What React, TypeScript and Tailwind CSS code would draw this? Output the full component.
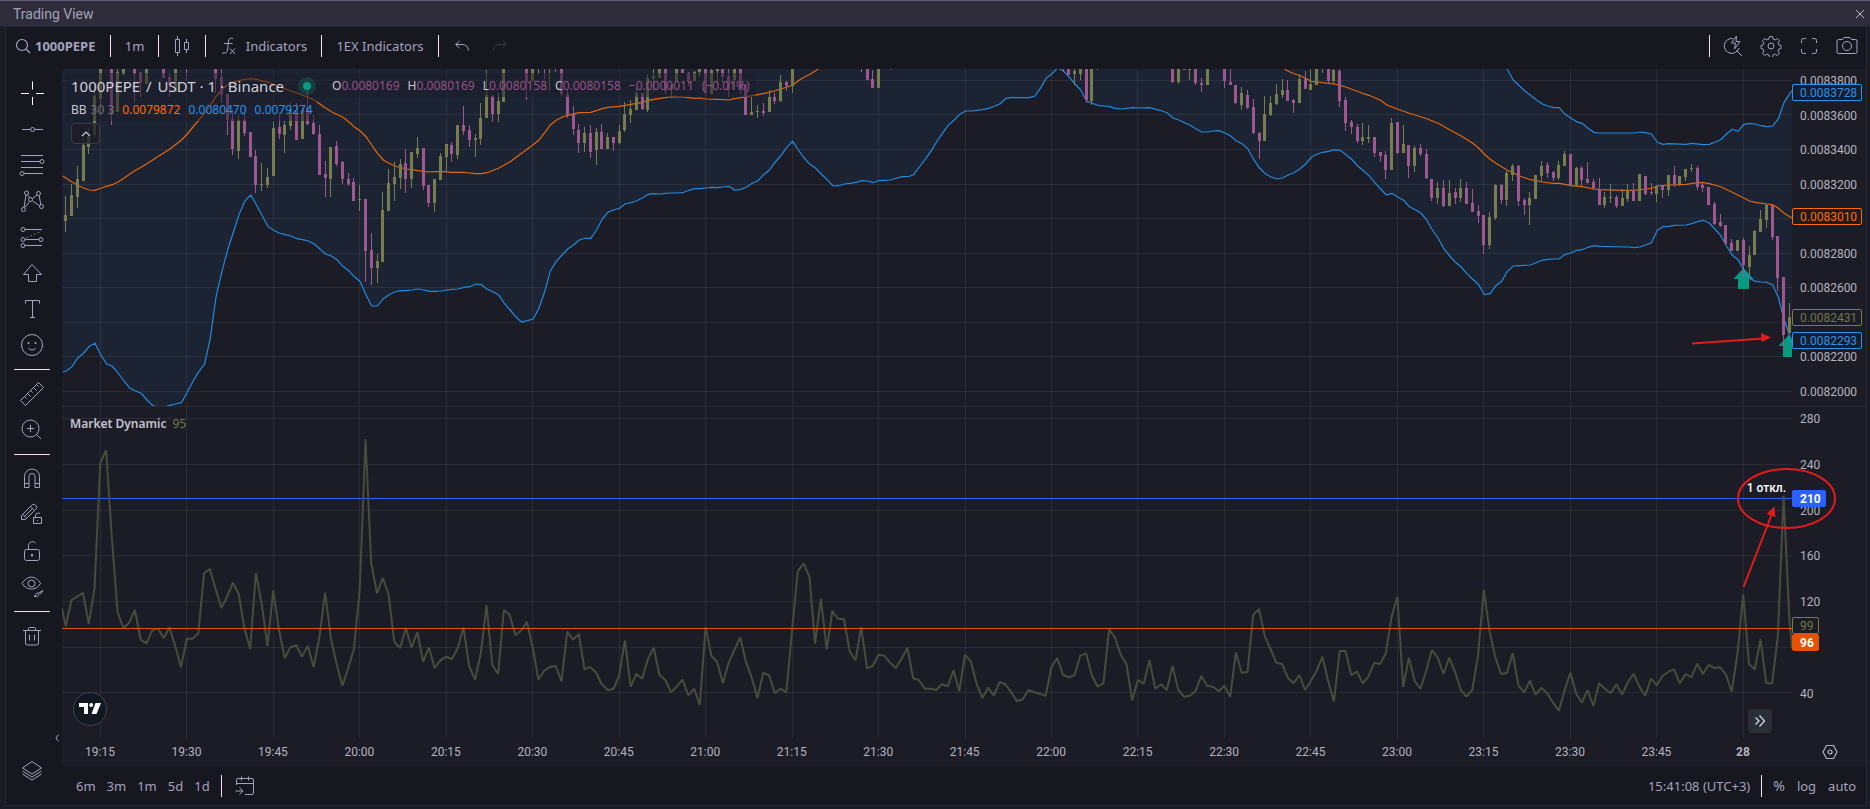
import type { ReactNode } from "react";

// One candle: minute offset from 19:15, high, body top, body bottom, low, direction.
type Candle = [number, number, number, number, number, "u" | "d"];
type Point = [number, number];

const candles: Candle[] = [
  [-6, 408, 465, 483, 516, "u"], [-5, 372, 405, 468, 468, "u"], [-4, 318, 357, 411, 444, "u"],
  [-3, 234, 255, 363, 363, "u"], [-2, 205, 228, 261, 282, "u"], [-1, 70, 108, 225, 230, "u"],
  [0, 27, 27, 117, 165, "u"], [2, 27, 27, 165, 195, "d"], [3, 27, 36, 156, 156, "u"],
  [4, 27, 27, 45, 45, "u"], [6, 27, 27, 42, 126, "d"], [7, 36, 39, 69, 111, "d"],
  [8, 27, 27, 72, 72, "u"], [11, 27, 27, 54, 54, "d"], [12, 39, 51, 75, 111, "d"],
  [13, 27, 27, 96, 96, "u"], [15, 27, 27, 27, 63, "d"], [20, 27, 27, 57, 99, "d"],
  [21, 27, 51, 105, 129, "d"], [22, 102, 102, 180, 225, "d"], [23, 150, 177, 267, 285, "d"],
  [24, 165, 180, 273, 297, "u"], [25, 159, 180, 219, 228, "d"], [26, 216, 216, 291, 291, "d"],
  [27, 270, 288, 375, 399, "d"], [28, 309, 372, 375, 393, "u"], [29, 324, 351, 375, 384, "u"],
  [30, 186, 204, 348, 348, "u"], [31, 156, 201, 222, 237, "d"], [32, 183, 195, 225, 279, "u"],
  [33, 129, 150, 198, 210, "u"], [34, 129, 150, 240, 240, "d"], [35, 141, 150, 237, 237, "u"],
  [36, 90, 141, 192, 195, "d"], [37, 165, 189, 222, 225, "d"], [38, 195, 222, 345, 345, "d"],
  [39, 303, 342, 354, 411, "d"], [40, 261, 261, 357, 411, "u"], [41, 243, 258, 312, 318, "d"],
  [42, 303, 306, 357, 372, "d"], [43, 339, 357, 372, 378, "d"], [44, 354, 366, 423, 423, "d"],
  [45, 375, 417, 420, 453, "u"], [46, 417, 417, 573, 666, "d"], [47, 519, 570, 624, 675, "d"],
  [48, 582, 603, 624, 669, "u"], [49, 396, 450, 606, 606, "u"], [50, 327, 369, 453, 453, "u"],
  [51, 306, 351, 372, 423, "u"], [52, 297, 312, 354, 387, "u"], [53, 267, 309, 357, 399, "d"],
  [54, 276, 276, 357, 384, "u"], [55, 231, 264, 282, 294, "u"], [56, 264, 264, 378, 390, "d"],
  [57, 375, 375, 429, 441, "d"], [58, 357, 357, 429, 456, "u"], [59, 279, 288, 360, 360, "u"],
  [60, 252, 252, 291, 333, "u"], [61, 246, 255, 282, 306, "d"], [62, 195, 195, 285, 297, "u"],
  [63, 138, 195, 213, 225, "d"], [64, 195, 210, 240, 261, "d"], [65, 222, 234, 240, 291, "u"],
  [66, 129, 174, 237, 255, "u"], [67, 30, 105, 174, 174, "u"], [68, 105, 108, 162, 186, "d"],
  [69, 99, 123, 162, 186, "u"], [70, 27, 27, 126, 126, "u"], [74, 27, 27, 66, 120, "d"],
  [75, 27, 27, 63, 63, "u"], [76, 27, 27, 27, 42, "u"], [77, 27, 27, 27, 57, "d"],
  [78, 27, 27, 27, 93, "u"], [79, 27, 27, 27, 36, "u"], [80, 27, 27, 102, 108, "d"],
  [81, 90, 102, 165, 174, "d"], [82, 138, 162, 207, 225, "d"], [83, 192, 210, 249, 279, "d"],
  [84, 201, 219, 249, 276, "u"], [85, 195, 219, 276, 294, "d"], [86, 204, 216, 270, 315, "u"],
  [87, 192, 216, 267, 267, "d"], [88, 219, 231, 267, 267, "u"], [89, 231, 231, 249, 273, "d"],
  [90, 195, 213, 249, 252, "u"], [91, 126, 162, 210, 216, "u"], [92, 120, 147, 165, 189, "u"],
  [93, 81, 99, 150, 150, "u"], [94, 99, 99, 147, 150, "d"], [95, 42, 54, 150, 156, "u"],
  [96, 27, 48, 57, 96, "u"], [97, 27, 27, 54, 54, "u"], [98, 27, 27, 93, 102, "d"],
  [99, 69, 75, 90, 114, "u"], [100, 27, 27, 66, 66, "u"], [101, 27, 27, 39, 39, "d"],
  [102, 36, 39, 66, 78, "d"], [103, 33, 36, 63, 63, "u"], [104, 27, 27, 36, 51, "u"],
  [105, 27, 27, 99, 108, "d"], [106, 27, 30, 102, 102, "u"], [107, 27, 27, 33, 75, "u"],
  [108, 27, 27, 51, 69, "d"], [109, 27, 48, 90, 111, "d"], [110, 27, 27, 60, 90, "u"],
  [111, 27, 27, 90, 102, "d"], [112, 72, 72, 165, 165, "d"], [113, 111, 156, 165, 165, "u"],
  [114, 135, 153, 156, 174, "u"], [115, 129, 153, 159, 168, "d"], [116, 90, 111, 156, 156, "u"],
  [117, 99, 111, 123, 132, "d"], [118, 45, 66, 123, 126, "u"], [119, 63, 66, 78, 93, "d"],
  [120, 27, 27, 78, 99, "u"], [132, 27, 27, 27, 36, "d"], [133, 27, 27, 60, 60, "d"],
  [134, 30, 57, 84, 84, "d"], [135, 27, 27, 84, 84, "u"], [137, 27, 27, 27, 30, "u"],
  [167, 27, 27, 27, 36, "d"], [168, 27, 27, 45, 45, "d"], [169, 27, 33, 42, 75, "u"],
  [170, 27, 27, 42, 60, "u"], [171, 27, 27, 120, 129, "d"], [172, 27, 27, 123, 135, "u"],
  [173, 27, 27, 27, 30, "u"], [186, 27, 27, 66, 69, "d"], [187, 27, 27, 66, 72, "u"],
  [188, 27, 27, 30, 30, "d"], [189, 27, 27, 30, 60, "u"], [190, 27, 27, 69, 75, "d"],
  [191, 54, 69, 75, 96, "d"], [192, 27, 27, 75, 75, "u"], [195, 27, 27, 63, 84, "d"],
  [196, 27, 66, 75, 75, "d"], [197, 75, 75, 129, 132, "d"], [198, 81, 99, 135, 150, "u"],
  [199, 90, 105, 144, 147, "d"], [200, 117, 141, 219, 222, "d"], [201, 216, 219, 243, 297, "d"],
  [202, 108, 162, 243, 243, "u"], [203, 108, 129, 165, 168, "u"], [204, 72, 102, 132, 135, "u"],
  [205, 57, 90, 105, 114, "u"], [206, 60, 90, 123, 123, "d"], [207, 117, 120, 129, 159, "d"],
  [208, 42, 57, 129, 129, "u"], [209, 33, 57, 87, 87, "d"], [210, 27, 72, 90, 90, "u"],
  [211, 27, 27, 75, 75, "u"], [212, 27, 27, 27, 39, "u"], [213, 27, 27, 63, 72, "d"],
  [214, 27, 30, 63, 72, "u"], [215, 27, 33, 123, 141, "d"], [216, 111, 120, 189, 213, "d"],
  [217, 180, 186, 201, 222, "d"], [218, 192, 201, 243, 249, "d"], [219, 189, 231, 243, 255, "u"],
  [220, 195, 231, 237, 249, "u"], [221, 231, 231, 279, 291, "d"], [222, 276, 276, 288, 306, "d"],
  [223, 273, 285, 330, 357, "d"], [224, 174, 189, 330, 330, "u"], [225, 186, 186, 279, 282, "d"],
  [226, 195, 252, 279, 279, "u"], [227, 255, 255, 318, 354, "d"], [228, 258, 264, 318, 336, "u"],
  [229, 252, 264, 282, 288, "d"], [230, 267, 282, 354, 357, "d"], [231, 357, 357, 414, 423, "d"],
  [232, 366, 384, 414, 432, "u"], [233, 360, 384, 438, 441, "d"], [234, 360, 399, 438, 438, "u"],
  [235, 384, 396, 414, 432, "d"], [236, 357, 384, 414, 426, "u"], [237, 366, 384, 432, 432, "d"],
  [238, 387, 429, 456, 456, "d"], [239, 435, 453, 468, 489, "d"], [240, 465, 465, 555, 582, "d"],
  [241, 456, 471, 555, 567, "u"], [242, 372, 375, 474, 480, "u"], [243, 372, 375, 420, 432, "d"],
  [244, 333, 339, 420, 438, "u"], [245, 312, 318, 345, 363, "u"], [246, 315, 318, 423, 438, "d"],
  [247, 414, 420, 435, 465, "d"], [248, 396, 414, 435, 495, "u"], [249, 345, 345, 417, 417, "u"],
  [250, 303, 318, 348, 366, "u"], [251, 306, 315, 339, 354, "d"], [252, 333, 336, 354, 363, "d"],
  [253, 303, 315, 354, 360, "u"], [254, 273, 282, 318, 318, "u"], [255, 282, 282, 375, 378, "d"],
  [256, 321, 324, 375, 378, "u"], [257, 318, 324, 360, 378, "d"], [258, 306, 357, 369, 369, "d"],
  [259, 357, 366, 384, 390, "d"], [260, 354, 387, 435, 435, "d"], [261, 396, 411, 435, 444, "u"],
  [262, 372, 411, 414, 429, "u"], [263, 405, 411, 438, 444, "d"], [264, 387, 414, 438, 438, "u"],
  [265, 372, 390, 417, 426, "u"], [266, 369, 390, 423, 423, "d"], [267, 342, 342, 423, 423, "u"],
  [268, 348, 348, 402, 405, "d"], [269, 369, 396, 399, 405, "d"], [270, 375, 378, 402, 426, "u"],
  [271, 378, 378, 390, 414, "d"], [272, 345, 345, 390, 408, "u"], [273, 318, 345, 375, 381, "d"],
  [274, 348, 348, 372, 378, "u"], [275, 327, 327, 351, 363, "u"], [276, 312, 324, 327, 336, "u"],
  [277, 318, 324, 381, 390, "d"], [278, 369, 375, 384, 396, "d"], [279, 381, 381, 435, 435, "d"],
  [280, 426, 432, 492, 495, "d"], [281, 462, 486, 498, 501, "d"], [282, 495, 495, 552, 552, "d"],
  [283, 537, 549, 573, 573, "d"], [284, 540, 540, 573, 573, "u"], [285, 534, 540, 615, 651, "d"],
  [286, 558, 585, 621, 648, "u"], [287, 510, 513, 585, 585, "u"], [288, 450, 477, 516, 516, "u"],
  [289, 432, 435, 480, 504, "u"], [290, 432, 435, 531, 540, "d"], [291, 528, 528, 654, 693, "d"],
  [292, 651, 651, 825, 870, "d"], [293, 729, 771, 819, 819, "u"],
];

const lowerBand: Point[] = [
  [-6.6, 936], [-6, 933], [-5, 920], [-4, 894], [-3, 880], [-2, 859], [-1, 850], [0, 885], [1, 912], [2, 919],
  [3, 939], [4, 963], [5, 984], [6, 993], [7, 1000], [8, 1020], [9, 1037], [10, 1042], [11, 1042], [12, 1036],
  [13, 1032], [14, 1028], [15, 997], [16, 964], [17, 935], [18, 912], [19, 835], [20, 710], [21, 635], [22, 570],
  [23, 517], [24, 463], [25, 423], [26, 405], [27, 435], [28, 467], [29, 500], [30, 511], [31, 520], [32, 524],
  [33, 528], [34, 536], [35, 539], [36, 543], [37, 552], [38, 567], [39, 582], [40, 588], [41, 600], [42, 619],
  [43, 632], [44, 650], [45, 665], [46, 705], [47, 738], [48, 738], [49, 716], [50, 704], [51, 696], [52, 692],
  [53, 692], [54, 690], [55, 687], [56, 690], [57, 694], [58, 694], [59, 693], [60, 690], [61, 688], [62, 687],
  [63, 682], [64, 680], [65, 673], [66, 674], [67, 688], [68, 695], [69, 705], [70, 730], [71, 750], [72, 771],
  [73, 786], [74, 782], [75, 777], [76, 745], [77, 695], [78, 632], [79, 605], [80, 585], [81, 567], [82, 555],
  [83, 540], [84, 535], [85, 535], [86, 510], [87, 477], [88, 456], [89, 450], [90, 445], [91, 431], [92, 428],
  [93, 422], [94, 413], [95, 403], [96, 401], [97, 402], [98, 400], [99, 399], [100, 399], [101, 398], [102, 391],
  [103, 386], [104, 386], [105, 384], [106, 382], [107, 383], [108, 381], [109, 379], [110, 391], [111, 388], [112, 382],
  [113, 370], [114, 362], [115, 344], [116, 330], [117, 306], [118, 287], [119, 262], [120, 244], [121, 270], [122, 294],
  [123, 313], [124, 325], [125, 343], [126, 359], [127, 378], [128, 377], [129, 372], [130, 370], [131, 367], [132, 362],
  [133, 363], [134, 368], [135, 362], [136, 361], [137, 360], [138, 355], [139, 350], [140, 350], [141, 344], [142, 321],
  [143, 298], [144, 274], [145, 245], [146, 220], [147, 196], [148, 181], [149, 163], [150, 153], [151, 153], [152, 151],
  [153, 149], [154, 145], [155, 139], [156, 131], [157, 115], [158, 113], [161, 113], [162, 109], [163, 85], [164, 55],
  [165, 41], [166, 24], [167, 33], [168, 52], [169, 72], [170, 90], [171, 124], [172, 130], [173, 136], [174, 138],
  [175, 140], [176, 145], [177, 147], [178, 145], [179, 143], [180, 144], [182, 143], [183, 148], [184, 152], [185, 159],
  [186, 174], [187, 180], [188, 188], [189, 196], [190, 207], [191, 216], [192, 216], [193, 213], [194, 212], [195, 219],
  [196, 228], [197, 243], [198, 251], [199, 267], [200, 299], [201, 324], [202, 341], [203, 351], [204, 357], [205, 354],
  [206, 345], [207, 338], [208, 327], [209, 312], [210, 292], [211, 282], [212, 277], [213, 274], [214, 269], [215, 271],
  [216, 284], [217, 298], [218, 317], [219, 332], [220, 347], [221, 368], [222, 387], [223, 405], [224, 400], [225, 412],
  [226, 421], [227, 440], [228, 449], [229, 459], [230, 480], [231, 510], [232, 535], [233, 567], [234, 588], [235, 607],
  [236, 622], [237, 641], [238, 658], [239, 674], [240, 704], [241, 701], [242, 677], [243, 664], [244, 634], [245, 618],
  [246, 617], [247, 616], [248, 615], [249, 608], [250, 601], [251, 598], [252, 597], [253, 597], [254, 583], [255, 579],
  [256, 571], [257, 569], [258, 562], [259, 557], [260, 559], [265, 561], [266, 563], [267, 561], [268, 555], [269, 548],
  [270, 511], [271, 500], [272, 499], [273, 496], [275, 495], [276, 491], [277, 485], [278, 481], [279, 489], [280, 507],
  [281, 527], [282, 557], [283, 585], [284, 599], [285, 630], [286, 655], [287, 664], [288, 666], [289, 667], [290, 675],
  [291, 712], [292, 778], [293, 830], [293.6, 860],
];

const basisEarly: Point[] = [
  [-6.6, 348], [-5, 366], [-4, 376], [-3, 384], [-2, 390], [-1, 391], [0, 385], [1, 379], [2, 374], [3, 366],
  [4, 355], [5, 343], [6, 331], [7, 322], [8, 311], [10, 289], [12, 267], [14, 240], [15, 222], [17, 180],
  [18, 160], [20, 110], [21, 88], [22, 75], [23, 65], [25, 58], [26, 56], [27, 58], [29, 67], [31, 80],
  [33, 93], [34, 98], [35, 106], [36, 112], [37, 120], [38, 132], [39, 144], [40, 155], [42, 172], [43, 185],
  [44, 201], [45, 213], [46, 230], [47, 255], [48, 280], [49, 300], [50, 310], [51, 318], [53, 327], [55, 332],
  [57, 336], [59, 334], [61, 337], [63, 337], [64, 339], [65, 341], [66, 341], [67, 338], [69, 325], [71, 305],
  [73, 280], [75, 254], [76, 240], [77, 218], [78, 195], [79, 181], [80, 172], [81, 166], [83, 158], [85, 157],
  [87, 146], [88, 142], [90, 139], [92, 133], [94, 127], [95, 121], [97, 115], [99, 110], [101, 111], [103, 115],
  [104, 114], [105, 117], [107, 118], [109, 120], [110, 116], [112, 110], [114, 104], [116, 97], [118, 87], [120, 76],
  [121, 62], [122, 52], [123, 43], [124, 32], [125, 20],
];

const basisLate: Point[] = [
  [205, 23], [206, 34], [207, 41], [208, 47], [209, 55], [210, 64], [211, 66], [213, 70], [214, 72], [215, 77],
  [216, 81], [217, 88], [218, 94], [219, 101], [220, 106], [221, 113], [222, 121], [223, 134], [225, 148], [227, 160],
  [228, 165], [230, 176], [232, 190], [234, 209], [236, 228], [238, 250], [239, 264], [240, 282], [241, 298], [242, 310],
  [243, 320], [244, 331], [245, 338], [246, 347], [247, 353], [248, 359], [249, 362], [250, 366], [252, 370], [253, 370],
  [254, 373], [255, 377], [257, 380], [259, 387], [260, 389], [264, 391], [266, 391], [268, 387], [269, 385], [270, 378],
  [272, 375], [275, 373], [277, 368], [278, 368], [279, 371], [281, 380], [283, 397], [285, 414], [286, 423], [287, 427],
  [289, 432], [290, 434], [291, 445], [292, 460], [293, 470], [293.6, 475],
];

const upperBand: Point[] = [
  [243.5, 15], [244, 28], [245, 60], [246, 76], [247, 92], [248, 106], [249, 119], [250, 131], [251, 138], [252, 143],
  [253, 143], [254, 163], [255, 174], [256, 185], [257, 190], [258, 205], [259, 217], [260, 219], [266, 219], [267, 216],
  [268, 218], [269, 222], [270, 247], [271, 253], [272, 251], [275, 253], [276, 250], [278, 254], [279, 253], [280, 247],
  [281, 239], [282, 222], [283, 208], [284, 214], [285, 193], [286, 190], [287, 192], [288, 197], [289, 200], [290, 198],
  [291, 177], [292, 127], [293, 100], [293.6, 88],
];

// One value per minute, starting at 19:09.
const dynamic = [
  678, 600, 590, 578, 672, 565, 190, 150, 412, 636, 684, 668, 630, 719, 730, 692, 685, 715, 682, 738, 802, 716, 716,
  700, 520, 507, 567, 624, 590, 548, 582, 685, 747, 519, 612, 738, 571, 690, 774, 742, 736, 770, 737, 802, 712, 578,
  715, 793, 857, 805, 747, 570, 118, 490, 580, 534, 582, 726, 744, 684, 743, 696, 785, 743, 804, 781, 770, 777, 745,
  682, 798, 839, 760, 616, 795, 822, 630, 644, 706, 692, 665, 742, 839, 812, 801, 798, 844, 695, 719, 702, 808, 801,
  818, 853, 870, 867, 828, 721, 860, 822, 836, 777, 743, 825, 839, 877, 860, 839, 886, 866, 915, 681, 768, 785, 850,
  788, 750, 712, 785, 833, 894, 819, 825, 880, 866, 877, 690, 514, 490, 530, 731, 596, 748, 633, 657, 657, 754, 781,
  681, 805, 798, 764, 767, 788, 804, 776, 743, 835, 840, 866, 866, 870, 853, 859, 811, 874, 764, 784, 850, 894, 863,
  887, 846, 853, 876, 904, 898, 870, 877, 881, 887, 801, 774, 825, 832, 826, 767, 760, 826, 860, 850, 688, 712, 764,
  792, 901, 839, 852, 780, 866, 853, 870, 798, 870, 890, 887, 873, 828, 857, 860, 874, 857, 890, 757, 819, 815, 645,
  627, 709, 747, 788, 792, 833, 850, 825, 870, 842, 812, 770, 843, 905, 753, 753, 825, 815, 850, 829, 788, 792, 760,
  650, 590, 860, 774, 843, 867, 812, 750, 773, 822, 773, 815, 870, 890, 870, 765, 570, 695, 773, 822, 819, 760, 856,
  877, 842, 884, 863, 880, 908, 932, 873, 818, 880, 908, 870, 918, 850, 866, 880, 853, 884, 846, 822, 860, 887, 836,
  856, 828, 815, 808, 850, 822, 832, 791, 822, 795, 804, 802, 823, 875, 760, 583, 792, 808, 718, 850, 850, 710, 287,
  660,
];

const times = [
  "19:15", "19:30", "19:45", "20:00", "20:15", "20:30", "20:45", "21:00", "21:15", "21:30",
  "21:45", "22:00", "22:15", "22:30", "22:45", "23:00", "23:15", "23:30", "23:45", "28",
];

// Empty entries are the ticks that a price tag covers.
const prices = ["0.0083800", "0.0083600", "0.0083400", "0.0083200", "", "0.0082800", "0.0082600", "", "0.0082200", "0.0082000"];
const levels = ["280", "240", "200", "160", "120", "", "40"];

const priceTags = [
  { value: "0.0083728", top: 15, className: "border-[#2196f3] text-[#2196f3]" },
  { value: "0.0083010", top: 139, className: "border-[#ff6d00] text-[#ff6d00]" },
  { value: "0.0082431", top: 240, className: "border-[#787d4d] text-[#72774a]" },
  { value: "0.0082293", top: 263, className: "border-[#2196f3] text-[#2196f3]" },
];

const levelTags = [
  { value: "210", top: 83, className: "w-[34px] border-[#2962ff] bg-[#2962ff] font-bold text-white" },
  { value: "99", top: 210, className: "w-[27px] border-[#787d4d] bg-[#1c1c27] text-[#72774a]" },
  { value: "96", top: 227, className: "w-[27px] border-[#e65100] bg-[#e65100] font-bold text-white" },
];

const PANE_W = 1730;
const PRICE_H = 337;
const LEVEL_H = 331;

const minuteX = (n: number) => 38.3 + n * 5.7647;
// Series heights are stored in thirds of a pixel.
const priceY = (v: number) => (v - 27) / 3;
const levelY = (v: number) => v / 3 - 7;

const line = (points: Point[]) => points.map(([n, v]) => `${(minuteX(n) + 0.5).toFixed(1)},${priceY(v).toFixed(1)}`).join(" ");

const columns = times.map((_, i) => Math.floor(38.3 + i * 86.47));

const bandArea = `0,0 ${minuteX(243.5).toFixed(1)},0 ${line(upperBand)} ${line([...lowerBand].reverse())}`;

const dynamicLine = [
  `0,${levelY(625)}`,
  ...dynamic.map((v, i) => `${minuteX(i - 6).toFixed(1)},${levelY(v).toFixed(1)}`),
  `1730,${levelY(745)}`,
].join(" ");

const Icon = ({ children, size = 28 }: { children: ReactNode; size?: number }) => (
  <svg width={size} height={size} viewBox={`0 0 ${size} ${size}`} fill="none" stroke="currentColor" aria-hidden="true" className="shrink-0">
    {children}
  </svg>
);

const drawTools: { label: string; icon: ReactNode; active?: boolean }[][] = [
  [
    { label: "Cross", active: true, icon: <path d="M14.5 2.5v8M14.5 18v8M3 14.5h8M18 14.5h8" /> },
    { label: "Trend line", icon: <><path d="M4 14.5h8M17 14.5h8" /><circle cx="14.5" cy="14.5" r="2" /></> },
    {
      label: "Fib retracement",
      icon: <><path d="M3 4.5h22M3 10.5h19M3 16.5h22M6 22.5h19" /><circle cx="24" cy="10.5" r="2" /><circle cx="4" cy="22.5" r="2" /></>,
    },
    {
      label: "Patterns",
      icon: (
        <>
          <path d="M6 20.5 8 8M9.5 8l2.5 3M14.5 11.5 19 8M21 8.5l2 9.5M14.5 14l7.5 5M11.5 14.5 7 20.5" />
          <circle cx="8.5" cy="6" r="2" /><circle cx="20.5" cy="6.5" r="2" /><circle cx="12.5" cy="12.5" r="2" />
          <circle cx="5.5" cy="22.5" r="2" /><circle cx="23.5" cy="19.5" r="2" />
        </>
      ),
    },
    {
      label: "Prediction",
      icon: (
        <>
          <path d="M7 6.5h17M7 16.5h14M7 22.5h17" />
          <path d="M9 14.5 24 8" strokeDasharray="1 3" />
          <circle cx="5" cy="6.5" r="2" /><circle cx="5" cy="16.5" r="2" /><circle cx="5" cy="22.5" r="2" /><circle cx="23" cy="16.5" r="2" />
        </>
      ),
    },
    { label: "Icons", icon: <path d="M14 5.5 23.5 15.5h-5v7h-8v-7h-5z" /> },
    { label: "Text", icon: <path d="M7.5 8.5v-3h14v3M14.5 5.5v17M12 22.5h5" /> },
    {
      label: "Emoji",
      icon: (
        <>
          <circle cx="14" cy="14" r="10.5" />
          <path d="M10.5 17c1.5 2.5 5.5 2.5 7 0" />
          <circle cx="10.5" cy="12" r="1" fill="currentColor" stroke="none" /><circle cx="17.5" cy="12" r="1" fill="currentColor" stroke="none" />
        </>
      ),
    },
  ],
  [
    { label: "Measure", icon: <path d="M2.5 20.5 20.5 2.5l5 5-18 18zM6.5 16.5l2 2M9.5 13.5l3 3M12.5 10.5l2 2M15.5 7.5l3 3M18.5 4.5l2 2" /> },
    { label: "Zoom in", icon: <><circle cx="12.5" cy="12.5" r="8.5" /><path d="M18.5 18.5 23 23M12.5 9v7M9 12.5h7" /></> },
  ],
  [
    { label: "Magnet", icon: <path d="M6.5 22.5v-11a7.5 7.5 0 0 1 15 0v11h-4.5v-11a3 3 0 0 0-6 0v11zM6.5 18.5H11M17 18.5h4.5" /> },
    {
      label: "Lock drawing mode",
      icon: (
        <>
          <path d="M3.5 18.5v-4L14.5 3.5q2-1 4 1.5 1 1.5 0 2.5l-11 11zM5 13.5l3.5 4M12.5 5.5l4 4M7 15l8-8" />
          <path d="M15.5 16.5h8v6h-8zM17.5 16.5v-2a2.5 2.5 0 0 1 4.5-1.5" />
          <path d="M19 19.5h1" />
        </>
      ),
    },
    {
      label: "Lock all drawings",
      icon: <><rect x="6.5" y="12.5" width="15" height="11" rx="2" /><path d="M10.5 12.5V8.5a4 4 0 0 1 7-2.5" /><path d="M14 17v2.5" strokeWidth="2" /></>,
    },
    {
      label: "Hide all drawings",
      icon: (
        <>
          <path d="M4 10.5C9 2 18 2 22.5 10.5 18 18 9 18 4 10.5z" />
          <circle cx="13.5" cy="10.5" r="3.5" />
          <path d="M16 23.5c2 0 1-3 3.5-3.5 2 0 2 3.5-1 3.5zM20.5 20l4.5-2.5-3 4" />
        </>
      ),
    },
  ],
  [
    { label: "Remove", icon: <path d="M5 8.5h18M7.5 8.5V21q0 2 2 2h9q2 0 2-2V8.5M10.5 8.5v-2q0-1 1-1h5q1 0 1 1v2M11.5 12.5v6M16.5 12.5v6" /> },
  ],
];

const Divider = () => <span className="h-[22px] w-px shrink-0 bg-[#f3e0f5]" />;

const TitleBar = () => (
  <header className="flex h-[26px] shrink-0 items-center justify-between border-t border-[#615e7e] bg-[#2f2d3b] pl-[13px] pr-1">
    <h1 className="font-['Roboto',sans-serif] text-sm leading-5 text-[#a3a1b8]">Trading View</h1>
    <button type="button" aria-label="Close" className="text-[#b9b7cc]">
      <svg width="12" height="12" viewBox="0 0 12 12" fill="none" stroke="currentColor" aria-hidden="true">
        <path d="M2 2l8 8M10 2l-8 8" />
      </svg>
    </button>
  </header>
);

const Toolbar = () => (
  <div className="flex h-[38px] shrink-0 items-center text-[13px] leading-5">
    <button type="button" className="flex w-[104px] items-center gap-1 whitespace-nowrap pl-[9px] font-bold">
      <svg width="16" height="16" viewBox="0 0 16 16" fill="none" stroke="currentColor" strokeWidth="1.2" aria-hidden="true" className="shrink-0">
        <circle cx="7" cy="7" r="5.5" /><path d="M11 11l4 4" />
      </svg>
      1000PEPE
    </button>
    <Divider />
    <button type="button" className="w-[47px]">1m</button>
    <Divider />
    <button type="button" aria-label="Candles" className="flex w-[46px] justify-center">
      <Icon size={22}>
        <path d="M4.5 4.5h4v13h-4zM6.5 1v3.5M6.5 17.5V21M13.5 7.5h4v7h-4zM15.5 4v3.5M15.5 14.5V18" />
      </Icon>
    </button>
    <Divider />
    <button type="button" className="flex w-[115px] items-center justify-center gap-2">
      <Icon size={18}>
        <path d="M13 1.5Q9 0 8.5 4L7.5 13q-.5 4-5.5 3M4 6.5h8.5M10 11.5l5 5.5M15 11.5 10 17" />
      </Icon>
      Indicators
    </button>
    <Divider />
    <button type="button" className="w-[116px] whitespace-nowrap">1EX Indicators</button>
    <Divider />
    <button type="button" aria-label="Undo" className="ml-1 flex w-[38px] justify-center">
      <Icon size={18}><path d="M6.5 4 2.5 7.5l4 3.5M3 7.5h6q6 0 6.5 6" /></Icon>
    </button>
    <button type="button" aria-label="Redo" className="flex w-[38px] justify-center text-[#3a3947]">
      <Icon size={18}><path d="M11.5 4l4 3.5-4 3.5M15 7.5H9q-6 0-6.5 6" /></Icon>
    </button>
    <div className="ml-auto flex items-center">
      <Divider />
      <button type="button" aria-label="Quick search" className="ml-1 flex w-[38px] justify-center">
        <Icon size={22}>
          <path d="M11 3.5A7.5 7.5 0 1 0 17 13M14.5 15.5 20 21M14.5 1 9.5 8h4l-1 6L18 6.5h-4z" />
        </Icon>
      </button>
      <button type="button" aria-label="Settings" className="flex w-[38px] justify-center">
        <Icon size={22}>
          <circle cx="11" cy="11" r="3" />
          <path d="M9.5 1.5h3l.5 2.5 2.2.9 2.1-1.4 2.2 2.2-1.4 2.1.9 2.2 2 .5v3l-2 .5-.9 2.2 1.4 2.1-2.2 2.2-2.1-1.4-2.2.9-.5 2.5h-3l-.5-2.5-2.2-.9-2.1 1.4-2.2-2.2 1.4-2.1-.9-2.2-2-.5v-3l2-.5.9-2.2-1.4-2.1 2.2-2.2L6.8 4.9 9 4z" />
        </Icon>
      </button>
      <button type="button" aria-label="Fullscreen" className="flex w-[38px] justify-center">
        <Icon size={18}>
          <path d="M1.5 6V3.5q0-2 2-2H6M12 1.5h2.5q2 0 2 2V6M16.5 12v2.5q0 2-2 2H12M6 16.5H3.5q-2 0-2-2V12" />
        </Icon>
      </button>
      <button type="button" aria-label="Snapshot" className="flex w-[38px] justify-center">
        <Icon size={22}>
          <path d="M2.5 4.5h4l1.5-2h6l1.5 2h4q1.5 0 1.5 1.5v11q0 1.5-1.5 1.5h-17Q1 18.5 1 17V6q0-1.5 1.5-1.5z" />
          <circle cx="11" cy="11" r="4.5" />
        </Icon>
      </button>
    </div>
  </div>
);

const Sidebar = () => (
  <nav aria-label="Drawing tools" className="relative flex w-[56px] shrink-0 flex-col items-center pb-4 pr-1 pt-1.5">
    {drawTools.map((group, i) => (
      <div key={i} className="flex flex-col items-center">
        {i > 0 && <span className="my-1.5 h-px w-9 bg-[#f3e0f5]" />}
        {group.map((tool) => (
          <button
            key={tool.label}
            type="button"
            aria-label={tool.label}
            className={`flex h-9 w-9 items-center justify-center ${tool.active ? "text-white" : ""}`}
          >
            <Icon>{tool.icon}</Icon>
          </button>
        ))}
      </div>
    ))}
    <button type="button" aria-label="Hide toolbar" className="absolute bottom-[62px] right-[3px]">
      <svg width="4" height="10" viewBox="0 0 4 10" fill="none" stroke="currentColor" aria-hidden="true">
        <path d="M3.5 1.5 1 5l2.5 3.5" />
      </svg>
    </button>
    <button type="button" aria-label="Object tree" className="mt-auto flex h-9 w-9 items-center justify-center">
      <Icon>
        <path d="M14 4.5 4.5 11l9.5 6 9.5-6zM4.5 14l9.5 6 9.5-6M4.5 17l9.5 6 9.5-6" />
      </Icon>
    </button>
  </nav>
);

const Ohlc = ({ name, value }: { name: string; value: string }) => (
  <span>
    <span className="text-[#c9c8d3]">{name}</span>
    {value}
  </span>
);

const PriceLegend = () => (
  <div className="absolute left-1 top-1 flex flex-col items-start font-['Noto_Sans',sans-serif] text-xs leading-4">
    <div className="flex h-6 items-center rounded-sm bg-[#1c1c27]/50 pl-[5px] pr-[6px] pt-px">
      <h2 className="flex whitespace-pre text-[15px] leading-5 text-[#d1d0db]">
        1000PEPE <span className="px-0.5">/</span> USDT · 1 · Binance
      </h2>
      <span className="ml-[14px] flex h-[18px] w-[18px] items-center justify-center rounded-full bg-[#089981]/25">
        <span className="h-2 w-2 rounded-full bg-[#089981]" />
      </span>
      <div className="ml-4 flex gap-2 whitespace-nowrap text-[#97538a]">
        <Ohlc name="O" value="0.0080169" />
        <Ohlc name="H" value="0.0080169" />
        <Ohlc name="L" value="0.0080158" />
        <Ohlc name="C" value="0.0080158" />
        <span>−0.0000011</span>
        <span>(−0.01%)</span>
      </div>
    </div>
    <div className="flex h-6 items-center gap-2 rounded-sm bg-[#1c1c27]/50 pl-[5px] pr-1 pt-px">
      <span className="flex gap-1">
        <span className="text-[#c9c8d3]">BB</span>
        <span className="text-[#6f6e7b]">30 3</span>
      </span>
      <span className="text-[#ff6d00]">0.0079872</span>
      <span className="text-[#2196f3]">0.0080470</span>
      <span className="text-[#2196f3]">0.0079274</span>
    </div>
    <button
      type="button"
      aria-label="Collapse legend"
      className="ml-[5px] mt-0.5 flex h-[21px] w-[29px] items-center justify-center rounded-sm border border-[#3a3a47] bg-[#1c1c27]/75 text-[#c9c8d3]"
    >
      <svg width="10" height="6" viewBox="0 0 10 6" fill="none" stroke="currentColor" strokeWidth="1.2" aria-hidden="true">
        <path d="M1 5l4-4 4 4" />
      </svg>
    </button>
  </div>
);

const GridLines = ({ rows, height }: { rows: number[]; height: number }) => (
  <g fill="#ffffff" fillOpacity="0.065" shapeRendering="crispEdges">
    {columns.map((x) => <rect key={x} x={x} y={0} width={1} height={height} />)}
    {rows.map((y) => <rect key={y} x={0} y={y} width={PANE_W} height={1} />)}
  </g>
);

const PricePane = () => (
  <section aria-label="Price" className="flex min-h-0 flex-[337_1_0%]">
    <div className="relative min-w-0 flex-1">
      <svg viewBox={`0 0 ${PANE_W} ${PRICE_H}`} preserveAspectRatio="none" className="absolute inset-0 h-full w-full" aria-hidden="true">
        <polygon points={bandArea} fill="#2196f3" fillOpacity="0.06" />
        <GridLines rows={prices.map((_, i) => Math.floor(11.4 + i * 34.56))} height={PRICE_H} />
        <g fill="#089981">
          <path d="M1681.5 199l10 11h-4.5v10h-11v-10h-4.5z" />
          <path d="M1726.5 266l10 11h-4.5v11h-11v-11h-4.5z" />
        </g>
        <g fill="none" strokeWidth="1.2">
          <polyline points={line(upperBand)} stroke="#2389dc" />
          <polyline points={line(lowerBand)} stroke="#2389dc" />
          <polyline points={line(basisEarly)} stroke="#e5670a" />
          <polyline points={line(basisLate)} stroke="#e5670a" />
        </g>
        <g shapeRendering="crispEdges">
          {candles.map(([n, high, top, bottom, low, dir]) => {
            const x = Math.floor(minuteX(n));
            return (
              <g key={n} fill={dir === "u" ? "#787d4d" : "#9f578f"}>
                <rect x={x} y={priceY(high)} width={1} height={(low - high) / 3} />
                <rect x={x - 1} y={priceY(top)} width={3} height={(bottom - top) / 3} />
              </g>
            );
          })}
        </g>
      </svg>
      <PriceLegend />
    </div>
    <div className="relative flex w-[74px] shrink-0 flex-col justify-between pb-[6px] pl-2 pt-1">
      {prices.map((price, i) => <span key={i} className="h-4">{price}</span>)}
      {priceTags.map((tag) => (
        <span
          key={tag.value}
          style={{ top: `${(tag.top / PRICE_H) * 100}%` }}
          className={`absolute left-0 h-[17px] w-[70px] rounded-xs border bg-[#1c1c27] pl-[7px] leading-4 ${tag.className}`}
        >
          {tag.value}
        </span>
      ))}
    </div>
  </section>
);

const DynamicPane = () => (
  <section aria-label="Market Dynamic" className="flex min-h-0 flex-[331_1_0%]">
    <div className="relative min-w-0 flex-1">
      <svg viewBox={`0 0 ${PANE_W} ${LEVEL_H}`} preserveAspectRatio="none" className="absolute inset-0 h-full w-full" aria-hidden="true">
        <GridLines rows={levels.map((_, i) => Math.floor(11.8 + i * 45.67))} height={LEVEL_H} />
        <rect x={0} y={91} width={PANE_W} height={1} fill="#2962ff" />
        <polyline points={dynamicLine} fill="none" stroke="#4a4c3b" strokeWidth="2" strokeLinejoin="bevel" />
        <rect x={0} y={221} width={PANE_W} height={1} fill="#e65100" />
      </svg>
      <div className="absolute left-2 top-[9px] flex gap-1.5 font-['Noto_Sans',sans-serif] text-xs leading-4">
        <h2 className="font-semibold text-[#c4c3ce]">Market Dynamic</h2>
        <span className="text-[#72774a]">95</span>
      </div>
      <span className="absolute right-[6px] top-[73px] font-medium leading-4 text-white">1 откл.</span>
      <a
        href="#tradingview"
        aria-label="TradingView"
        className="absolute bottom-[12px] left-[11px] flex h-[34px] w-[34px] items-center justify-center rounded-full border border-[#40414d] bg-[#131722] text-white"
      >
        <svg width="22" height="12" viewBox="0 0 22 12" fill="currentColor" aria-hidden="true">
          <path d="M0 0h9v11H5V4H0z" /><circle cx="12.2" cy="2" r="2" /><path d="M16.5 0H22l-4.5 11h-5z" />
        </svg>
      </a>
      <button
        type="button"
        aria-label="Scroll to latest bar"
        className="absolute bottom-[5px] right-5 flex h-6 w-6 items-center justify-center rounded-sm bg-[#2a2e39] text-[#d1d4dc] shadow"
      >
        <svg width="12" height="12" viewBox="0 0 12 12" fill="none" stroke="currentColor" strokeWidth="1.3" aria-hidden="true">
          <path d="M1.5 2.5 5 6 1.5 9.5M5.5.5 10.5 6l-5 5.5" />
        </svg>
      </button>
    </div>
    <div className="relative flex w-[74px] shrink-0 flex-col justify-between pb-9 pl-2 pt-1">
      {levels.map((level, i) => <span key={i} className="h-4">{level}</span>)}
      {levelTags.map((tag) => (
        <span
          key={tag.value}
          style={{ top: `${(tag.top / LEVEL_H) * 100}%` }}
          className={`absolute left-0 h-[17px] rounded-xs border pl-[7px] leading-4 ${tag.className}`}
        >
          {tag.value}
        </span>
      ))}
    </div>
  </section>
);

const TimeAxis = () => (
  <div className="flex h-7 shrink-0 items-center">
    <div className="flex min-w-0 flex-1 justify-between pl-[22px] pr-[33px]">
      {times.map((time) => (
        <span key={time} className={`w-8 text-center ${time === "28" ? "font-bold" : ""}`}>{time}</span>
      ))}
    </div>
    <div className="flex w-[74px] shrink-0 justify-center pl-0.5">
      <button type="button" aria-label="Chart settings">
        <svg width="16" height="16" viewBox="0 0 16 16" fill="none" stroke="currentColor" strokeWidth="1.2" aria-hidden="true">
          <path d="M4.5 1.5h7L15 8l-3.5 6.5h-7L1 8z" /><circle cx="8" cy="8" r="2" />
        </svg>
      </button>
    </div>
  </div>
);

// Hand-drawn marks over both panes.
const Annotations = () => (
  <svg viewBox="0 0 1804 697" preserveAspectRatio="none" className="pointer-events-none absolute inset-0 h-full w-full" fill="none" stroke="#e31b1b" strokeWidth="2" aria-hidden="true">
    <path d="M1630 274.5 1702 269.5" />
    <path d="M1709 268.5l-10-4.5.5 9z" fill="#e31b1b" stroke="none" />
    <path d="M1681.5 518 1709.5 446" />
    <path d="M1712.5 437.5l-8 7.5 9 3z" fill="#e31b1b" stroke="none" />
    <ellipse cx="1724.5" cy="429.5" rx="48.5" ry="29.5" />
  </svg>
);

const Footer = () => (
  <footer className="flex h-[39px] shrink-0 items-center pl-[14px] pr-[10px] text-[13px] leading-5">
    <div className="flex gap-[11px]">
      {["6m", "3m", "1m", "5d", "1d"].map((range) => <button key={range} type="button">{range}</button>)}
    </div>
    <span className="ml-[11px] flex"><Divider /></span>
    <button type="button" aria-label="Go to date" className="ml-3">
      <Icon size={22}>
        <path d="M2.5 10V5q0-1.5 1.5-1.5h14q1.5 0 1.5 1.5v13q0 1.5-1.5 1.5h-7M2.5 8.5h17M7.5 1.5v4M14.5 1.5v4M1.5 16h7M5.5 12.5 9 16l-3.5 3.5" />
      </Icon>
    </button>
    <button type="button" className="ml-auto">15:41:08 (UTC+3)</button>
    <span className="mx-[11px] flex"><Divider /></span>
    <div className="flex gap-3">
      <button type="button" className="text-sm leading-5">%</button>
      <button type="button">log</button>
      <button type="button">auto</button>
    </div>
  </footer>
);

const App = () => {
  return (
    <div className="flex h-screen min-h-[640px] flex-col bg-[#1b1b25] pb-[3px] font-['Noto_Sans',sans-serif] text-[#a5a3be]">
      <TitleBar />
      <main className="ml-[5px] mr-[3px] flex min-h-0 flex-1 flex-col border border-[#2a2935] bg-[#17171f]">
        <Toolbar />
        <div className="flex min-h-0 flex-1 pt-1">
          <Sidebar />
          <div className="flex min-w-0 flex-1 flex-col">
            <div className="relative flex min-h-0 flex-1 flex-col overflow-hidden rounded-tl bg-[#1c1c27] font-['Roboto',sans-serif] text-xs leading-4 text-[#b4b3be]">
              <PricePane />
              <div className="h-px shrink-0 bg-[#2d2c39]" />
              <DynamicPane />
              <TimeAxis />
              <Annotations />
            </div>
            <Footer />
          </div>
        </div>
      </main>
    </div>
  );
};

export default App;
